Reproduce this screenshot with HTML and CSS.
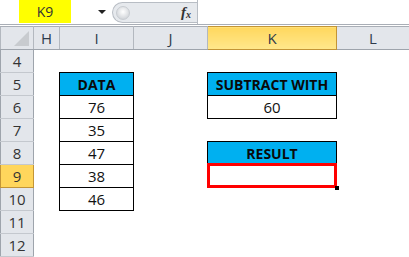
FILE: index.html
```html
<!DOCTYPE html>
<html lang="en">
<head>
    <meta charset="UTF-8">
    <title>Subtract in Excel</title>
    <link rel="stylesheet" href="styles.css">
</head>
<body>
    <div class="formula-bar">
        <div class="name-box">K9</div>
        <div class="name-drop"><span class="arrow"></span></div>
        <div class="fx-group">
            <span class="knob"></span>
            <span class="fx">f<sub>x</sub></span>
        </div>
        <div class="formula-input"></div>
    </div>

    <table class="sheet">
        <colgroup>
            <col class="c-row"><col class="c-h"><col class="c-i"><col class="c-j"><col class="c-k"><col class="c-l">
        </colgroup>
        <tr class="col-heads">
            <th class="corner"><span class="tri"></span></th>
            <th>H</th><th>I</th><th>J</th><th class="sel">K</th><th>L</th>
        </tr>
        <tr><th class="rh">4</th><td></td><td></td><td></td><td></td><td></td></tr>
        <tr>
            <th class="rh">5</th><td></td><td class="box head">DATA</td><td></td>
            <td class="box head">SUBTRACT WITH</td><td></td>
        </tr>
        <tr><th class="rh">6</th><td></td><td class="box">76</td><td></td><td class="box">60</td><td></td></tr>
        <tr><th class="rh">7</th><td></td><td class="box">35</td><td></td><td></td><td></td></tr>
        <tr><th class="rh">8</th><td></td><td class="box">47</td><td></td><td class="box head">RESULT</td><td></td></tr>
        <tr>
            <th class="rh sel">9</th><td></td><td class="box">38</td><td></td>
            <td class="box active"><span class="cursor"></span><span class="handle"></span></td><td></td>
        </tr>
        <tr><th class="rh">10</th><td></td><td class="box">46</td><td></td><td></td><td></td></tr>
        <tr><th class="rh">11</th><td></td><td></td><td></td><td></td><td></td></tr>
        <tr><th class="rh">12</th><td></td><td></td><td></td><td></td><td></td></tr>
    </table>
</body>
</html>
```

FILE: styles.css
```css
* {
    margin: 0;
    padding: 0;
    box-sizing: border-box;
}

body {
    width: 409px;
    height: 257px;
    overflow: hidden;
    background: #fff;
    font-family: 'Open Sans', 'Liberation Sans', sans-serif;
    color: #222;
}

/* Formula bar */
.formula-bar {
    display: flex;
    height: 25px;
    border-bottom: 1px solid #a9aeb6;
    margin-bottom: 1px;
}

.name-box {
    width: 52px;
    height: 23px;
    margin-left: 19px;
    background: #ffff00;
    font-size: 14px;
    line-height: 23px;
    text-align: center;
    color: #333;
}

.name-drop {
    width: 41px;
    display: flex;
    align-items: center;
    justify-content: flex-end;
    padding-right: 6px;
}

.arrow {
    width: 0;
    height: 0;
    border-left: 4px solid transparent;
    border-right: 4px solid transparent;
    border-top: 4px solid #222;
}

.fx-group {
    display: flex;
    align-items: center;
    justify-content: space-between;
    width: 85px;
    height: 21px;
    margin-top: 2px;
    padding: 0 6px 0 3px;
    background: #e6e9ed;
    border: 1px solid #b8bdc4;
    border-right: none;
    border-radius: 11px 0 0 11px;
}

.knob {
    width: 14px;
    height: 14px;
    border-radius: 50%;
    background: radial-gradient(circle at 50% 40%, #fff 0, #d6d9dd 70%, #c3c7cc 100%);
    border: 1px solid #c8ccd1;
}

.fx {
    font-family: 'Liberation Serif', serif;
    font-style: italic;
    font-weight: bold;
    font-size: 15px;
    color: #333;
}

.fx sub {
    font-size: 10px;
    vertical-align: -1px;
}

.formula-input {
    flex: 1;
    border-left: 1px solid #b8bdc4;
}

/* Sheet grid */
.sheet {
    border-collapse: collapse;
    table-layout: fixed;
    width: 409px;
}

.c-row { width: 33px; }
.c-h { width: 26px; }
.c-i { width: 74px; }
.c-j { width: 74px; }
.c-k { width: 129px; }
.c-l { width: 73px; }

.sheet tr {
    height: 23px;
}

.sheet th {
    font-weight: normal;
    font-size: 15px;
    color: #2e3b4b;
    background: #e3e6eb;
    border: 1px solid #b3b8bf;
    padding: 0;
}

.col-heads th {
    border-top: 1px solid #a9aeb6;
    border-bottom: 1px solid #9ea4ac;
}

.corner {
    position: relative;
}

.tri {
    position: absolute;
    right: 4px;
    bottom: 3px;
    width: 0;
    height: 0;
    border-left: 15px solid transparent;
    border-bottom: 15px solid #c8cbcf;
}

.sheet .rh {
    color: #333;
    border-color: #c4c8ce #9ea4ac;
}

.sheet th.sel {
    background: linear-gradient(#ffd75e, #ffe88c);
    border: 1px solid #c39536;
}

.sheet .rh.sel {
    background: #ffd65c;
}

.sheet td {
    padding: 0;
    font-size: 15px;
    text-align: center;
    color: #111;
}

.sheet td.box {
    border: 1px solid #000;
}

.sheet td.head {
    background: #00b0f0;
    font-weight: bold;
    font-size: 14px;
    color: #0a0a0a;
}

.active {
    position: relative;
}

.cursor {
    position: absolute;
    left: -1px;
    top: -2px;
    right: -1px;
    bottom: -1px;
    border: 3px solid #ff0000;
}

.handle {
    position: absolute;
    right: -3px;
    bottom: -3px;
    width: 4px;
    height: 4px;
    background: #000;
}
```
